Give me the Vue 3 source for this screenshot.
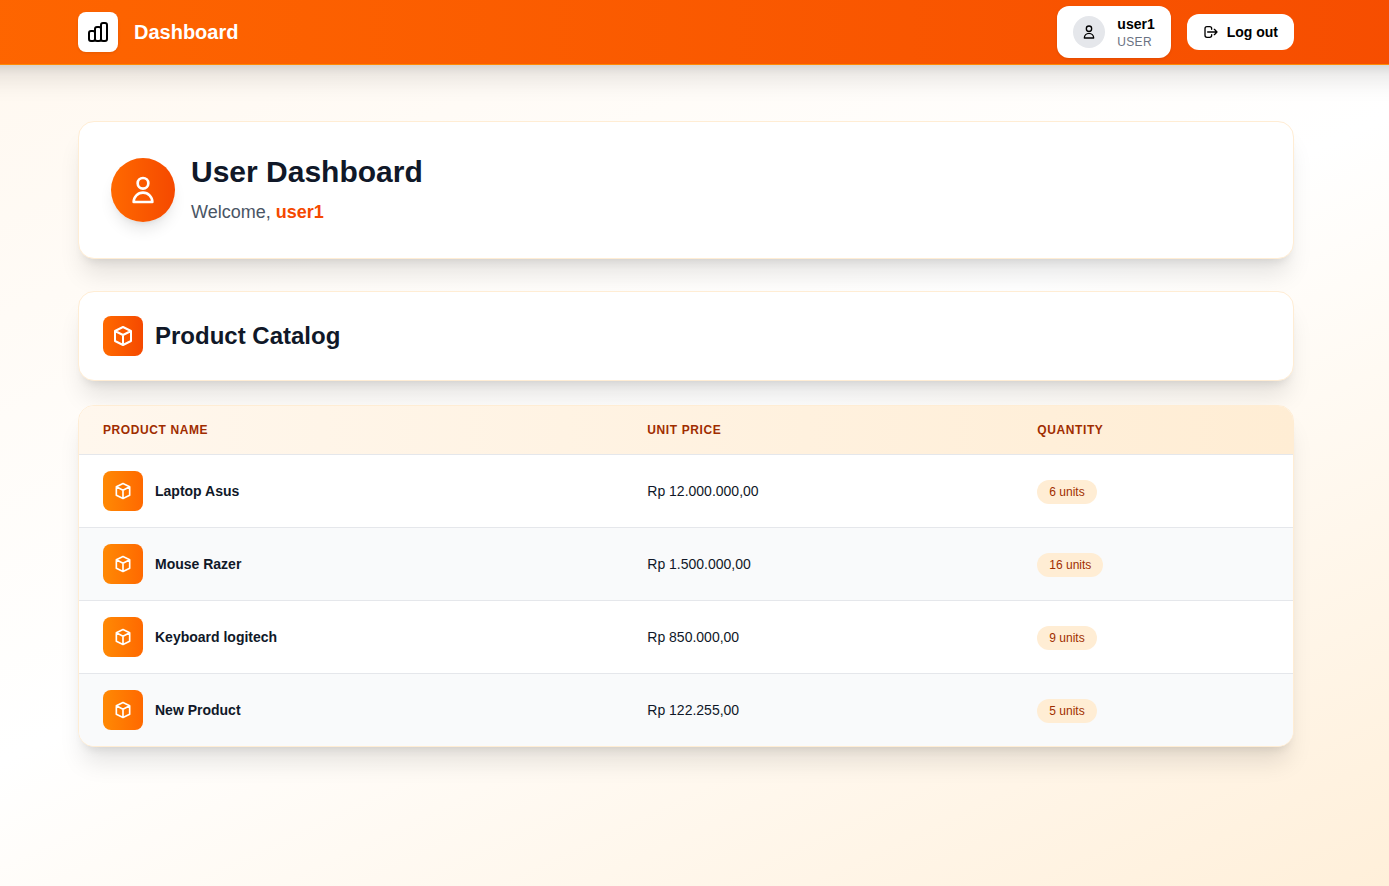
<script setup>
const products = [
  { name: 'Laptop Asus', price: 'Rp 12.000.000,00', qty: 6 },
  { name: 'Mouse Razer', price: 'Rp 1.500.000,00', qty: 16 },
  { name: 'Keyboard logitech', price: 'Rp 850.000,00', qty: 9 },
  { name: 'New Product', price: 'Rp 122.255,00', qty: 5 },
]
</script>

<template>
  <div class="page">
    <header class="topbar">
      <div class="container bar">
        <div class="brand">
          <div class="logo">
            <svg width="24" height="24" viewBox="0 0 24 24" fill="none" stroke="currentColor" stroke-width="2" stroke-linecap="round" stroke-linejoin="round">
              <path d="M9 19v-6a2 2 0 0 0-2-2H5a2 2 0 0 0-2 2v6a2 2 0 0 0 2 2h2a2 2 0 0 0 2-2zm0 0V9a2 2 0 0 1 2-2h2a2 2 0 0 1 2 2v10m-6 0a2 2 0 0 0 2 2h2a2 2 0 0 0 2-2m0 0V5a2 2 0 0 1 2-2h2a2 2 0 0 1 2 2v14a2 2 0 0 1-2 2h-2a2 2 0 0 1-2-2z" />
            </svg>
          </div>
          <span class="brand-name">Dashboard</span>
        </div>
        <div class="actions">
          <div class="account">
            <div class="avatar">
              <svg width="16" height="16" viewBox="0 0 24 24" fill="none" stroke="currentColor" stroke-width="2" stroke-linecap="round" stroke-linejoin="round">
                <path d="M16 7a4 4 0 1 1-8 0 4 4 0 0 1 8 0zM12 14a7 7 0 0 0-7 7h14a7 7 0 0 0-7-7z" />
              </svg>
            </div>
            <div>
              <div class="account-name">user1</div>
              <div class="account-role">USER</div>
            </div>
          </div>
          <button class="logout" type="button">
            <svg width="16" height="16" viewBox="0 0 24 24" fill="none" stroke="currentColor" stroke-width="2" stroke-linecap="round" stroke-linejoin="round">
              <path d="M17 16l4-4m0 0l-4-4m4 4H7m6 4v1a3 3 0 0 1-3 3H6a3 3 0 0 1-3-3V7a3 3 0 0 1 3-3h4a3 3 0 0 1 3 3v1" />
            </svg>
            <span>Log out</span>
          </button>
        </div>
      </div>
    </header>

    <main class="container content">
      <section class="card welcome">
        <div class="welcome-icon">
          <svg width="32" height="32" viewBox="0 0 24 24" fill="none" stroke="currentColor" stroke-width="2" stroke-linecap="round" stroke-linejoin="round">
            <path d="M16 7a4 4 0 1 1-8 0 4 4 0 0 1 8 0zM12 14a7 7 0 0 0-7 7h14a7 7 0 0 0-7-7z" />
          </svg>
        </div>
        <div>
          <h1>User Dashboard</h1>
          <p>Welcome, <strong>user1</strong></p>
        </div>
      </section>

      <section class="card catalog">
        <div class="tile deep">
          <svg width="24" height="24" viewBox="0 0 24 24" fill="none" stroke="currentColor" stroke-width="2" stroke-linecap="round" stroke-linejoin="round">
            <path d="M20 7l-8-4-8 4m16 0l-8 4m8-4v10l-8 4m0-10L4 7m8 4v10M4 7v10l8 4" />
          </svg>
        </div>
        <h2>Product Catalog</h2>
      </section>

      <section class="card list">
        <div class="row head">
          <div>PRODUCT NAME</div>
          <div>UNIT PRICE</div>
          <div>QUANTITY</div>
        </div>
        <div v-for="p in products" :key="p.name" class="row item">
          <div class="product">
            <div class="tile">
              <svg width="20" height="20" viewBox="0 0 24 24" fill="none" stroke="currentColor" stroke-width="2" stroke-linecap="round" stroke-linejoin="round">
                <path d="M20 7l-8-4-8 4m16 0l-8 4m8-4v10l-8 4m0-10L4 7m8 4v10M4 7v10l8 4" />
              </svg>
            </div>
            <span class="product-name">{{ p.name }}</span>
          </div>
          <div>{{ p.price }}</div>
          <div class="quantity"><span class="badge">{{ p.qty }} units</span></div>
        </div>
      </section>
    </main>
  </div>
</template>

<style scoped>
* {
  box-sizing: border-box;
}
.page {
  min-height: 100vh;
  overflow: hidden;
  font-family: "Liberation Sans", Arial, sans-serif;
  color: #101828;
  background: linear-gradient(to bottom right in oklab, #fff7ed, #fff 50%, #ffedd4) -266px 0 / 1904px 100% no-repeat;
}
svg {
  display: block;
}
.container {
  width: 1280px;
  margin-left: 46px;
  padding: 0 32px;
}
.topbar {
  width: 1904px;
  height: 65px;
  margin-left: -266px;
  padding-left: 266px;
  background: linear-gradient(to right in oklab, #ff6900, #f54900);
  border-bottom: 1px solid #ff8904;
  box-shadow: 0 20px 25px -5px rgba(0, 0, 0, 0.1), 0 8px 10px -6px rgba(0, 0, 0, 0.1);
}
.bar {
  height: 64px;
  display: flex;
  align-items: center;
  justify-content: space-between;
}
.brand,
.actions {
  display: flex;
  align-items: center;
  gap: 16px;
}
.logo {
  width: 40px;
  height: 40px;
  display: grid;
  place-items: center;
  border-radius: 8px;
  background: #fff;
  color: #000;
  box-shadow: 0 1px 3px rgba(0, 0, 0, 0.1);
}
.brand-name {
  font-size: 20px;
  line-height: 28px;
  font-weight: 700;
  color: #fff;
}
.account {
  display: flex;
  align-items: center;
  gap: 12px;
  padding: 8px 16px;
  border-radius: 12px;
  background: #fff;
  box-shadow: 0 1px 3px rgba(0, 0, 0, 0.1);
}
.avatar {
  width: 32px;
  height: 32px;
  display: grid;
  place-items: center;
  border-radius: 50%;
  background: #e5e7eb;
  color: #000;
}
.account-name {
  font-size: 14px;
  line-height: 20px;
  font-weight: 700;
  color: #000;
}
.account-role {
  font-size: 12px;
  line-height: 16px;
  letter-spacing: 0.3px;
  color: #6a7282;
}
.logout {
  display: flex;
  align-items: center;
  gap: 8px;
  padding: 8px 16px;
  border: 0;
  border-radius: 12px;
  background: #fff;
  color: #000;
  font: 700 14px/20px "Liberation Sans", Arial, sans-serif;
}
.content {
  padding-top: 56px;
  padding-bottom: 32px;
}
.card {
  border: 1px solid #ffedd4;
  border-radius: 16px;
  background: #fff;
  box-shadow: 0 20px 25px -5px rgba(0, 0, 0, 0.1), 0 8px 10px -6px rgba(0, 0, 0, 0.1);
}
.welcome {
  display: flex;
  align-items: center;
  gap: 16px;
  padding: 32px;
  margin-bottom: 32px;
}
.welcome-icon {
  width: 64px;
  height: 64px;
  display: grid;
  place-items: center;
  border-radius: 50%;
  color: #fff;
  background: linear-gradient(to right, #ff6900, #f54900);
  box-shadow: 0 10px 15px -3px rgba(0, 0, 0, 0.1), 0 4px 6px -4px rgba(0, 0, 0, 0.1);
}
h1 {
  margin: 0 0 8px;
  font-size: 30px;
  line-height: 36px;
}
p {
  margin: 0;
  font-size: 18px;
  line-height: 28px;
  color: #4a5565;
}
strong {
  color: #f54900;
}
.catalog {
  display: flex;
  align-items: center;
  gap: 12px;
  padding: 24px;
  margin-bottom: 24px;
}
h2 {
  margin: 0;
  font-size: 24px;
  line-height: 32px;
}
.tile {
  width: 40px;
  height: 40px;
  display: grid;
  place-items: center;
  border-radius: 8px;
  color: #fff;
  background: linear-gradient(to right, #ff8904, #ff6900);
}
.tile.deep {
  background: linear-gradient(to right, #ff6900, #f54900);
}
.list {
  overflow: hidden;
}
.row {
  display: grid;
  grid-template-columns: 544.3px 390px 1fr;
  align-items: center;
}
.row > div {
  padding: 0 24px;
}
.head {
  height: 48px;
  font-size: 12px;
  line-height: 16px;
  font-weight: 700;
  letter-spacing: 0.6px;
  color: #9f2d00;
  background: linear-gradient(to right, #fff7ed, #ffedd4);
}
.item {
  height: 73px;
  border-top: 1px solid #e5e7eb;
  font-size: 14px;
  line-height: 20px;
}
.item:nth-child(odd) {
  background: #f9fafb;
}
.product {
  display: flex;
  align-items: center;
  gap: 12px;
}
.product-name {
  font-weight: 700;
}
.row > .quantity {
  padding-top: 2px;
}
.badge {
  display: inline-block;
  padding: 4px 12px;
  border-radius: 12px;
  font-size: 12px;
  line-height: 16px;
  color: #9f2d00;
  background: #ffedd4;
}
</style>

<style>
body {
  margin: 0;
}
</style>
